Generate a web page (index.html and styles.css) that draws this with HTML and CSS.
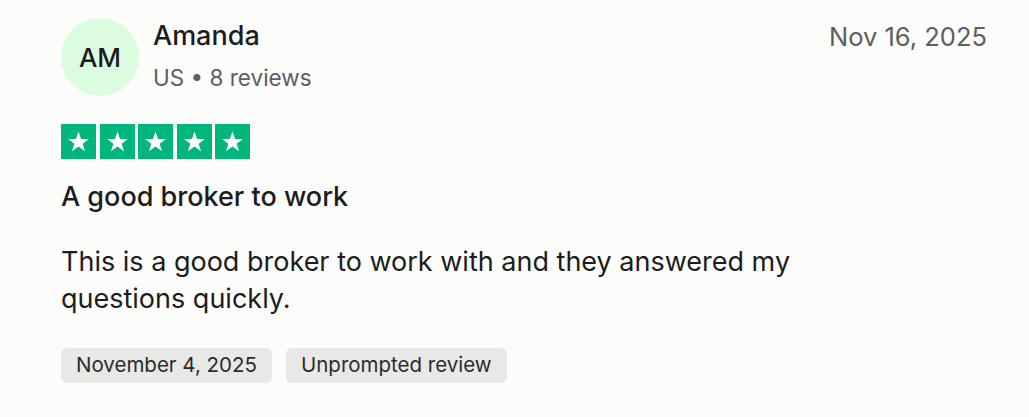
FILE: index.html
```html
<!DOCTYPE html>
<html lang="en">
<head>
    <meta charset="UTF-8">
    <title>Review</title>
    <link rel="stylesheet" href="styles.css">
</head>
<body>
    <article class="review">
        <header class="top">
            <div class="avatar">AM</div>
            <div class="who">
                <h2 class="navn">Amanda</h2>
                <p class="meta">US &bull; 8 reviews</p>
            </div>
            <time class="dato">Nov 16, 2025</time>
        </header>

        <div class="stars">
            <span class="star"><svg viewBox="0 0 24 24"><path d="M12 3.2l2.3 6.6h7l-5.6 4.1 2.1 6.7L12 16.5l-5.8 4.1 2.1-6.7-5.6-4.1h7z"/></svg></span>
            <span class="star"><svg viewBox="0 0 24 24"><path d="M12 3.2l2.3 6.6h7l-5.6 4.1 2.1 6.7L12 16.5l-5.8 4.1 2.1-6.7-5.6-4.1h7z"/></svg></span>
            <span class="star"><svg viewBox="0 0 24 24"><path d="M12 3.2l2.3 6.6h7l-5.6 4.1 2.1 6.7L12 16.5l-5.8 4.1 2.1-6.7-5.6-4.1h7z"/></svg></span>
            <span class="star"><svg viewBox="0 0 24 24"><path d="M12 3.2l2.3 6.6h7l-5.6 4.1 2.1 6.7L12 16.5l-5.8 4.1 2.1-6.7-5.6-4.1h7z"/></svg></span>
            <span class="star"><svg viewBox="0 0 24 24"><path d="M12 3.2l2.3 6.6h7l-5.6 4.1 2.1 6.7L12 16.5l-5.8 4.1 2.1-6.7-5.6-4.1h7z"/></svg></span>
        </div>

        <h3 class="titel">A good broker to work</h3>
        <p class="tekst">This is a good broker to work with and they answered my questions quickly.</p>

        <div class="tags">
            <span class="tag">November 4, 2025</span>
            <span class="tag">Unprompted review</span>
        </div>
    </article>
</body>
</html>
```

FILE: styles.css
```css
body {
    margin: 0;
    background-color: #fcfcfb;
    font-family: 'Inter', 'Noto Sans', sans-serif;
    color: #1c1c1c;
}

.review {
    padding: 18px 42px 0 61px;
}

.top {
    display: flex;
    align-items: flex-start;
    height: 78px;
}

.avatar {
    width: 78px;
    height: 78px;
    border-radius: 50%;
    background-color: #dcfce0;
    display: flex;
    align-items: center;
    justify-content: center;
    font-size: 26px;
    font-weight: 500;
    flex-shrink: 0;
}

.who {
    margin-left: 14px;
    flex: 1;
}

.navn {
    margin: 2px 0 0 0;
    font-size: 27px;
    font-weight: 500;
    line-height: 32px;
}

.meta {
    margin: 12px 0 0 0;
    font-size: 22.5px;
    line-height: 28px;
    color: #5e5e5e;
}

.dato {
    margin-top: 4px;
    font-size: 25.5px;
    line-height: 30px;
    color: #5e5e5e;
}

.stars {
    display: flex;
    gap: 3.5px;
    margin-top: 28px;
}

.star {
    width: 35px;
    height: 35px;
    background-color: #00b67a;
    display: flex;
    align-items: center;
    justify-content: center;
}

.star svg {
    width: 27px;
    height: 27px;
    fill: white;
}

.titel {
    margin: 22px 0 0 0;
    font-size: 27px;
    font-weight: 500;
    line-height: 32px;
}

.tekst {
    margin: 30px 0 0 0;
    font-size: 27px;
    line-height: 37px;
    max-width: 780px;
}

.tags {
    display: flex;
    gap: 14px;
    margin-top: 31px;
}

.tag {
    background-color: #e8e8e6;
    border-radius: 6px;
    padding: 0 15px;
    height: 34.5px;
    line-height: 34.5px;
    font-size: 20.5px;
    color: #2c2c2c;
}
```
